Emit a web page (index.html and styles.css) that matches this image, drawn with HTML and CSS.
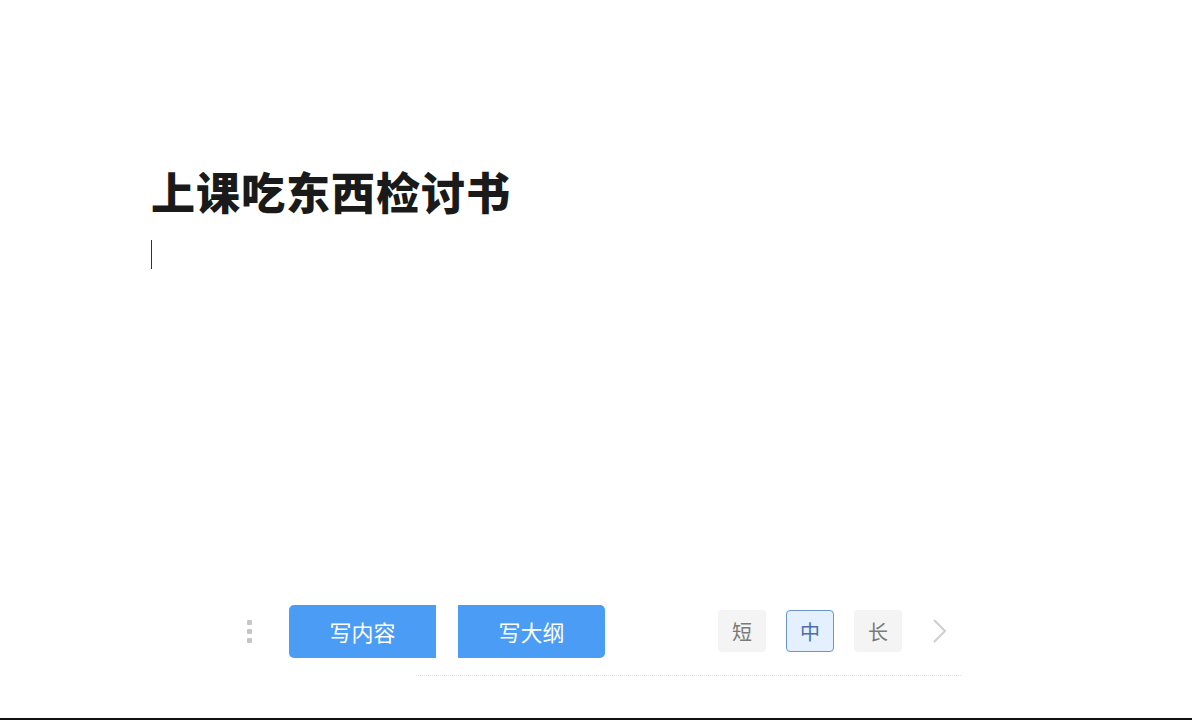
FILE: index.html
```html
<!DOCTYPE html>
<html lang="zh">
<head>
<meta charset="utf-8">
<link rel="stylesheet" href="styles.css">
</head>
<body>
<div class="page">
  <div class="editor">
    <h1 class="title">上课吃东西检讨书</h1>
    <div class="caret"></div>
  </div>
  <div class="toolbar">
    <div class="handle">
      <span></span><span></span><span></span>
    </div>
    <div class="actions">
      <button class="btn btn-left">写内容</button>
      <button class="btn btn-right">写大纲</button>
    </div>
    <div class="lengths">
      <span class="len">短</span>
      <span class="len active">中</span>
      <span class="len">长</span>
      <svg class="chev" width="16" height="26" viewBox="0 0 16 26"><path d="M2 2 L13 13 L2 24" fill="none" stroke="#cfcfcf" stroke-width="2"/></svg>
    </div>
  </div>
  <div class="divider"></div>
</div>
<div class="footer-bar"></div>
</body>
</html>
```
FILE: styles.css
```css
html, body {
  margin: 0;
  padding: 0;
  background: #fff;
  font-family: "Noto Sans CJK SC", "Noto Sans", sans-serif;
}
.page {
  height: 718px;
  display: flex;
  flex-direction: column;
  box-sizing: border-box;
}
.editor {
  flex: 1;
  padding: 164px 0 0 151px;
}
.title {
  margin: 0;
  font-size: 44px;
  line-height: 54px;
  font-weight: 800;
  color: #1a1a1a;
  letter-spacing: 1px;
}
.caret {
  margin: 22px 0 0 0;
  width: 1px;
  height: 29px;
  background: #333;
}
.toolbar {
  display: flex;
  align-items: center;
  padding-left: 247px;
  height: 54px;
}
.handle {
  display: grid;
  grid-template-columns: 5px;
  gap: 4px;
  width: 5px;
  margin-right: 37px;
}
.handle span {
  display: block;
  width: 5px;
  height: 5px;
  background: #c4c6cc;
  border-radius: 1px;
}
.actions {
  display: flex;
  gap: 22px;
}
.btn {
  width: 147px;
  height: 53px;
  border: none;
  background: #4b9cf5;
  color: #fff;
  font-family: "Noto Sans CJK SC", sans-serif;
  font-size: 22px;
  padding: 0;
}
.btn-left {
  border-radius: 5px 0 0 5px;
}
.btn-right {
  border-radius: 0 5px 5px 0;
}
.lengths {
  display: flex;
  align-items: center;
  margin-left: 113px;
  gap: 20px;
}
.len {
  width: 48px;
  height: 42px;
  display: flex;
  align-items: center;
  justify-content: center;
  background: #f4f4f4;
  color: #7a7a7a;
  font-size: 20px;
  border-radius: 4px;
  box-sizing: border-box;
}
.len.active {
  background: #e4f0fd;
  border: 1px solid #6b94cf;
  color: #4a6fa8;
}
.chev {
  margin-left: 10px;
}
.divider {
  margin: 17px 0 42px 416px;
  width: 545px;
  border-top: 1px dotted #e2e2e2;
}
.footer-bar {
  height: 2px;
  background: #111;
}
```
